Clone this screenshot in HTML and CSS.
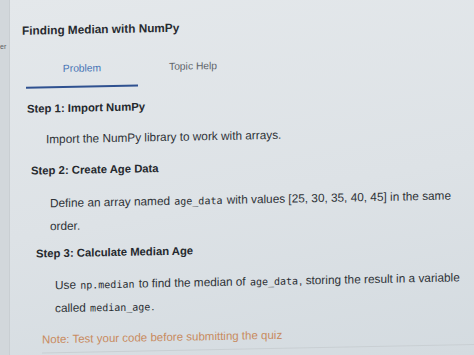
FILE: index.html
```html
<!DOCTYPE html>
<html>
<head>
    <title>Finding Median with NumPy</title>
    <link rel="stylesheet" href="styles.css">
</head>
<body>
    <div class="page">
        <!-- left sidebar, mostly cut off -->
        <div class="sidebar"><span class="sidetext">er</span></div>

        <div class="panel">
            <h1 class="title">Finding Median with NumPy</h1>

            <div class="tabs">
                <div class="tab active">Problem</div>
                <div class="tab">Topic Help</div>
            </div>

            <div class="step s1">
                <h2>Step 1: Import NumPy</h2>
                <p>Import the NumPy library to work with arrays.</p>
            </div>

            <div class="step s2">
                <h2>Step 2: Create Age Data</h2>
                <p>Define an array named <code>age_data</code> with values [25, 30, 35, 40, 45] in the same<br>order.</p>
            </div>

            <div class="step s3">
                <h2>Step 3: Calculate Median Age</h2>
                <p>Use <code>np.median</code> to find the median of <code>age_data</code>, storing the result in a variable<br>called <code>median_age</code>.</p>
            </div>

            <p class="note">Note: Test your code before submitting the quiz</p>
        </div>
    </div>
</body>
</html>
```

FILE: styles.css
```css
html, body {
    margin: 0;
    padding: 0;
}
.page {
    display: flex;
    width: 474px;
    height: 355px;
    overflow: hidden;
    font-family: "Liberation Sans", Arial, sans-serif;
    color: #2a2e33;
    background: linear-gradient(170deg, #e4e8eb 0%, #dde2e6 55%, #d4dbe0 100%);
}
.sidebar {
    width: 9px;
    flex: none;
    background: #d2d7db;
    border-right: 1px solid #c9ced2;
    position: relative;
}
.sidetext {
    position: absolute;
    left: 0;
    top: 43px;
    font-size: 7px;
    color: #5a5f64;
}
.panel {
    flex: 1;
    padding: 23px 0 0 12px;
    transform: skewY(-1.1deg);
    transform-origin: 0 0;
}
.title {
    margin: 0;
    font-size: 11.8px;
    line-height: 16px;
    font-weight: bold;
    color: #272b30;
}
.tabs {
    display: flex;
    margin-top: 20px;
    margin-left: 4px;
}
.tab {
    font-size: 10.3px;
    line-height: 14px;
    color: #5e646a;
    padding: 4px 0 10px;
    text-align: center;
}
.tab.active {
    width: 112px;
    color: #4673b5;
    border-bottom: 2px solid #2f5190;
}
.tab:not(.active) {
    margin-left: 31px;
}
.step h2 {
    margin: 0;
    font-size: 11.3px;
    line-height: 16px;
    font-weight: bold;
    color: #25292e;
}
.step p {
    margin: 0;
    font-size: 11.8px;
    line-height: 23px;
    color: #2f3338;
    white-space: nowrap;
}
.step code {
    font-family: "DejaVu Sans Mono", monospace;
    font-size: 10px;
    margin: 0 1px;
    color: #2a2e33;
}
.s1 { margin: 12px 0 0 5px; }
.s1 p { margin: 12px 0 0 19px; }
.s2 { margin: 11px 0 0 9px; }
.s2 p { margin: 14px 0 0 19px; }
.s3 { margin: 7px 0 0 14px; }
.s3 p { margin: 13px 0 0 19px; }
.note {
    margin: 11px 0 0 20px;
    padding-bottom: 5px;
    font-size: 11.5px;
    line-height: 16px;
    color: #c88b5f;
    border-bottom: 1px solid #c9cfd3;
}
```
